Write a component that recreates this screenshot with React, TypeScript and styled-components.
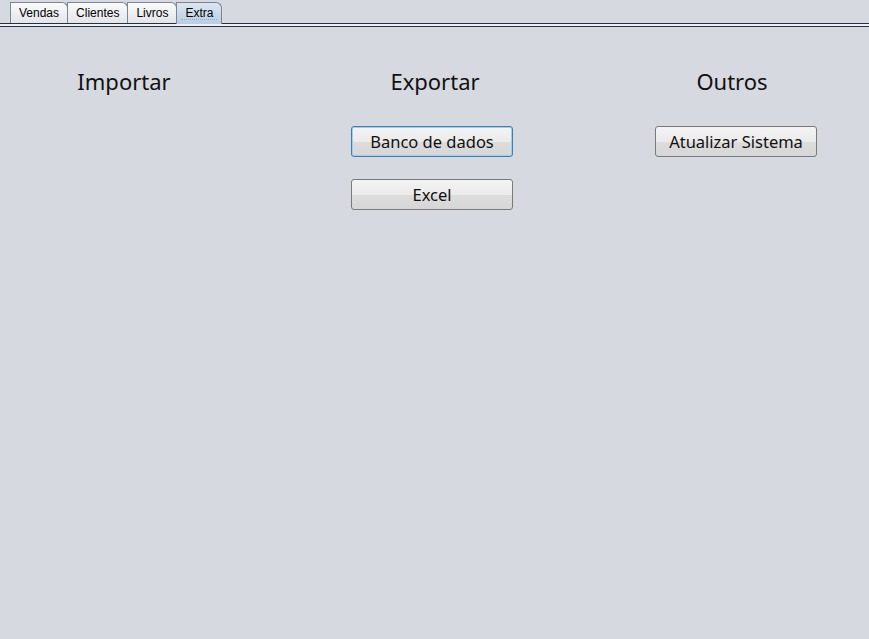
import React, { FC } from "react";
import styled, { createGlobalStyle, css } from "styled-components";

const GlobalStyle = createGlobalStyle`
    html, body {
        margin: 0;
        padding: 0;
        background-color: #d6d9e0;
    }
    #root {
        min-height: 639px;
    }
`;

const Window = styled.div`
    width: 869px;
    height: 639px;
    background-color: #d6d9e0;
    font-family: "Segoe UI", "Noto Sans", "Open Sans", sans-serif;
    color: #111;
    overflow: hidden;
`;

const TabStrip = styled.div`
    display: flex;
    flex-direction: row;
    align-items: flex-end;
    height: 23px;
    padding: 0 0 0 10px;
    border-bottom: 1px solid #24313f;
`;

const Tab = styled.div<{ $active?: boolean }>`
    position: relative;
    height: 21px;
    padding: 0 8px;
    margin-right: -1px;
    display: flex;
    align-items: center;
    font-family: "Liberation Sans", Arial, sans-serif;
    font-size: 12px;
    color: #000;
    border: 1px solid #7b8694;
    border-bottom: none;
    border-radius: 0 6px 0 0;
    background: linear-gradient(#fbfbfb, #e2e4e8);
    box-sizing: border-box;
    ${(p) =>
        p.$active &&
        css`
            height: 22px;
            margin-bottom: -1px;
            padding-bottom: 1px;
            z-index: 1;
            background: linear-gradient(#dce6f0, #b9cde2);
            &::after {
                content: "";
                position: absolute;
                left: 4px;
                right: 4px;
                bottom: 4px;
                border-bottom: 1px dotted #8fb0d2;
            }
        `}
`;

const TabRule = styled.div`
    height: 2px;
    background-color: #eef0f3;
    border-bottom: 1px solid #24313f;
`;

const Content = styled.div`
    display: flex;
    flex-direction: row;
    padding-top: 39px;
`;

const Column = styled.div<{ $width: number; $offset: number }>`
    flex: 0 0 auto;
    width: ${(p) => p.$width}px;
    margin-left: ${(p) => p.$offset}px;
    display: flex;
    flex-direction: column;
    align-items: center;
`;

const Heading = styled.div<{ $shift?: number }>`
    font-size: 22px;
    line-height: 30px;
    margin-bottom: 30px;
    white-space: nowrap;
    transform: translateX(${(p) => p.$shift || 0}px);
`;

const ButtonList = styled.div`
    display: flex;
    flex-direction: column;
    gap: 22px;
    width: 100%;
`;

const Button = styled.button<{ $focused?: boolean }>`
    width: 100%;
    height: 31px;
    box-sizing: border-box;
    font-family: "Segoe UI", "Noto Sans", "Open Sans", sans-serif;
    font-size: 16.5px;
    white-space: nowrap;
    color: #111;
    border: 1px solid #7a7a7a;
    border-radius: 3px;
    background: linear-gradient(#f3f3f3 0%, #ebebeb 50%, #dddddd 51%, #d6d6d6 100%);
    padding: 0;
    cursor: pointer;
    ${(p) =>
        p.$focused &&
        css`
            border-color: #3c7fb1;
            box-shadow: inset 0 0 0 1px #a6cbe6;
        `}
`;

const App: FC = () => {
    return (
        <Window>
            <GlobalStyle />
            <TabStrip>
                <Tab>Vendas</Tab>
                <Tab>Clientes</Tab>
                <Tab>Livros</Tab>
                <Tab $active>Extra</Tab>
            </TabStrip>
            <TabRule />
            <Content>
                <Column $width={248} $offset={0}>
                    <Heading>Importar</Heading>
                </Column>
                <Column $width={162} $offset={103}>
                    <Heading $shift={3}>Exportar</Heading>
                    <ButtonList>
                        <Button $focused>Banco de dados</Button>
                        <Button>Excel</Button>
                    </ButtonList>
                </Column>
                <Column $width={162} $offset={142}>
                    <Heading $shift={-4}>Outros</Heading>
                    <ButtonList>
                        <Button>Atualizar Sistema</Button>
                    </ButtonList>
                </Column>
            </Content>
        </Window>
    );
};

export default App;
